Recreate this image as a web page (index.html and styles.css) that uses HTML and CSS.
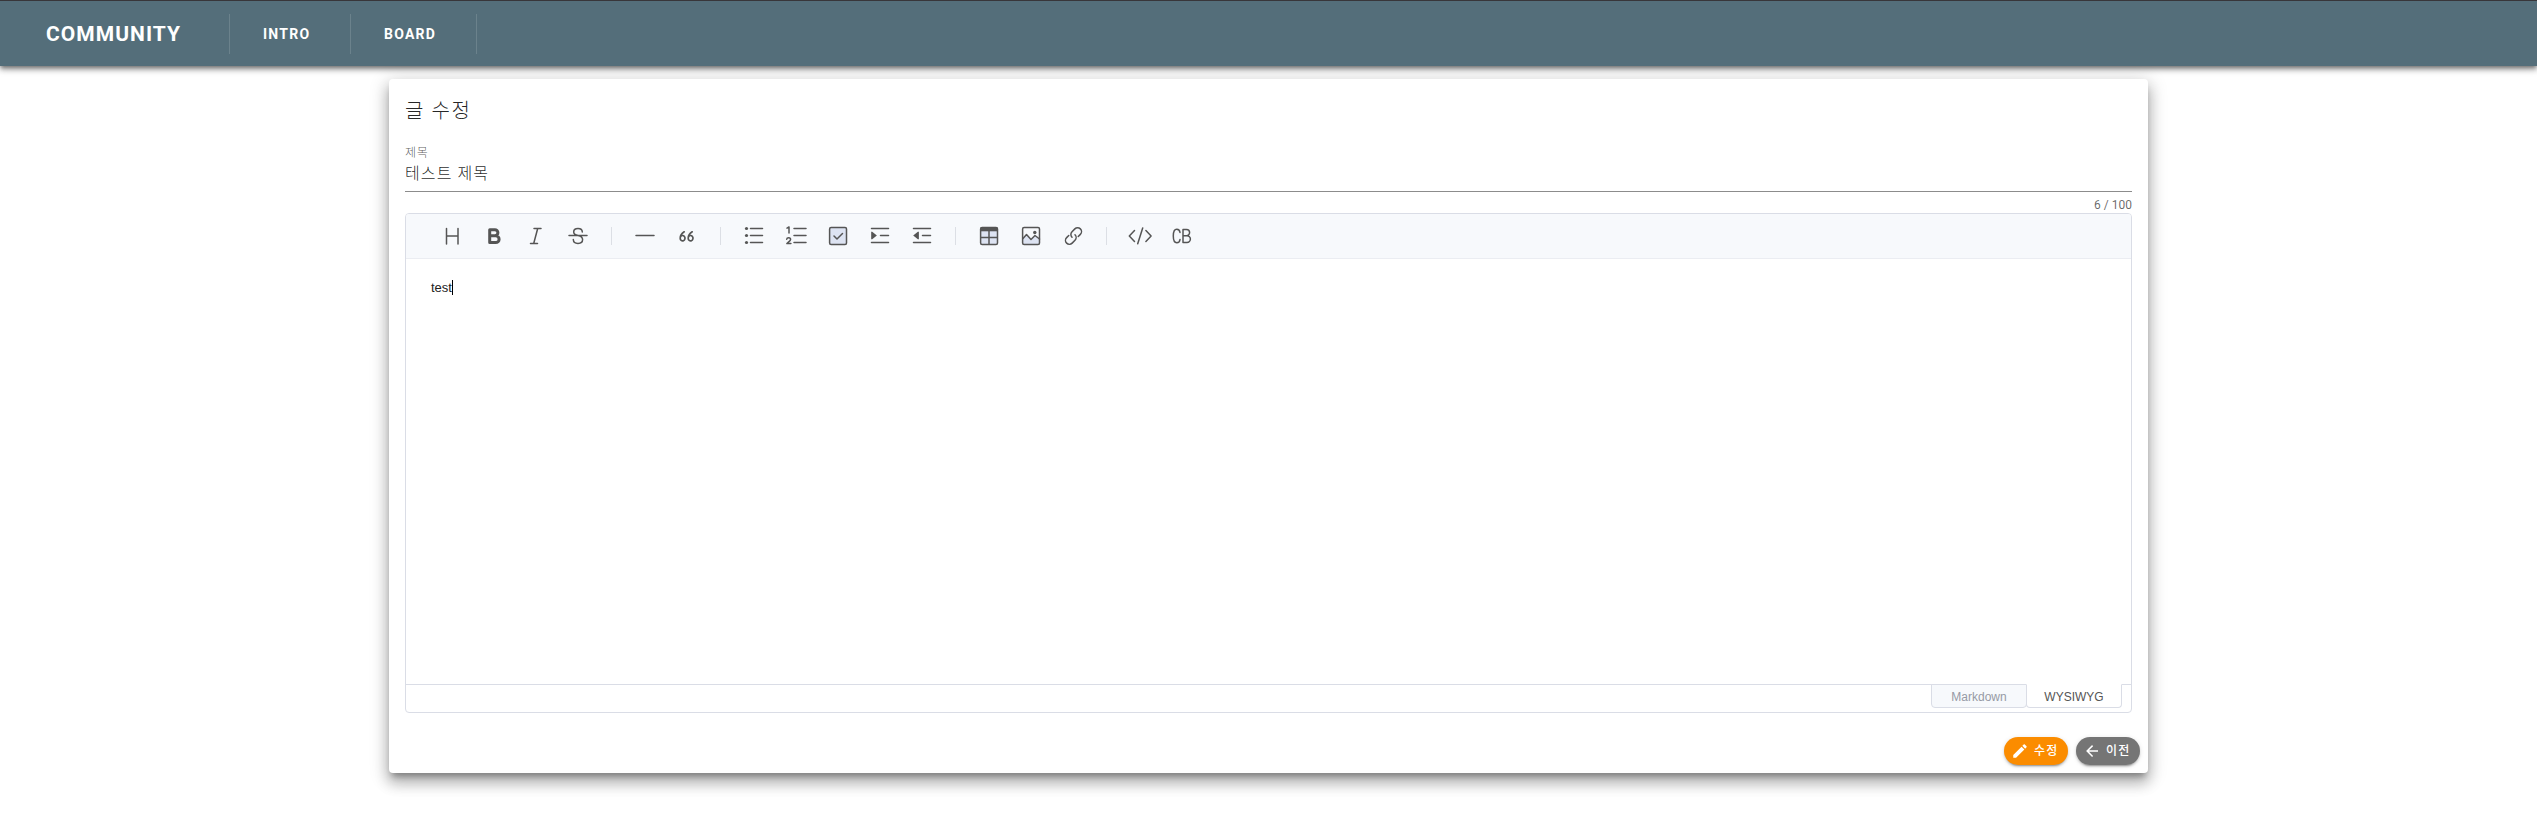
FILE: index.html
```html
<!DOCTYPE html>
<html lang="ko">
<head>
<meta charset="utf-8">
<title>Community</title>
<link rel="stylesheet" href="styles.css">
</head>
<body>
<header class="app-bar">
  <a class="brand">COMMUNITY</a>
  <a class="nav-item intro">INTRO</a>
  <a class="nav-item board">BOARD</a>
</header>
<main class="card">
  <h1 class="card-title">글 수정</h1>
  <div class="field">
    <label class="field-label">제목</label>
    <div class="field-value">테스트 제목</div>
  </div>
  <div class="counter">6 / 100</div>
  <section class="editor">
    <div class="toolbar">
      <svg class="tool" viewBox="0 0 32 32"><path d="M10.500 8.500v15.500M22 8.500v15.500M10.500 16h11.500"/></svg>
      <svg class="tool bold" viewBox="0 0 32 32"><path d="M11.700 9.800h5.200a3 3 0 0 1 0 6h-5.200zM11.700 15.800h6a3.400 3.400 0 0 1 0 6.800h-6z"/></svg>
      <svg class="tool" viewBox="0 0 32 32"><path d="M14 8.500h7M10.500 23.500h7M17.700 8.500l-4 15"/></svg>
      <svg class="tool" viewBox="0 0 32 32"><path d="M7 15.500h18M20.300 12c0-2-1.800-3.500-4.300-3.500s-4.300 1.300-4.300 3.400c0 2.200 2 3 4.400 3.600 2.700.7 4.500 1.600 4.500 4 0 2.300-1.900 3.900-4.600 3.900-2.800 0-4.600-1.500-4.700-3.900"/></svg>
      <span class="split"></span>
      <svg class="tool" viewBox="0 0 32 32"><path d="M7 15.500h18"/></svg>
      <svg class="tool quote" viewBox="0 0 32 32"><path d="M13.200 11.800c-2.800 1.800-4 4-4 6.400a2.400 2.700 0 1 0 .3-1.300M21.200 11.800c-2.800 1.800-4 4-4 6.400a2.400 2.700 0 1 0 .3-1.300"/></svg>
      <span class="split"></span>
      <svg class="tool" viewBox="0 0 32 32"><g class="solid"><circle cx="8.500" cy="8.500" r="1.600"/><circle cx="8.500" cy="15.500" r="1.600"/><circle cx="8.500" cy="22.500" r="1.600"/></g><path d="M12.500 8.500h12M12.500 15.500h12M12.500 22.500h12"/></svg>
      <svg class="tool" viewBox="0 0 32 32"><path d="M14 8.500h12M14 15.500h12M14 22.500h12"/><path class="num" d="M7 8.200L9 7v6M6.700 19.300c.2-2.200 3.900-2.200 3.900.1 0 1.400-2.500 2.800-3.700 4.200h4"/></svg>
      <svg class="tool" viewBox="0 0 32 32"><rect class="tint" x="7.600" y="7.600" width="16.900" height="16.900" rx="1.500"/><path d="M12 16l3 3 5.500-5.500"/></svg>
      <svg class="tool" viewBox="0 0 32 32"><path d="M7.500 8.500h17M16.500 15.500h8M7.500 22.500h17"/><path class="solid" d="M7.200 11.800h1l4.700 3.700-4.700 3.700h-1z"/></svg>
      <svg class="tool" viewBox="0 0 32 32"><path d="M7.500 8.500h17M16.500 15.500h8M7.500 22.500h17"/><path class="solid" d="M12.900 11.800h-1l-4.700 3.700 4.700 3.700h1z"/></svg>
      <span class="split"></span>
      <svg class="tool" viewBox="0 0 32 32"><rect class="tint" x="7.600" y="7.600" width="16.900" height="16.900" rx="1.500"/><path class="solid" d="M7.500 7.500h17v3.800h-17z"/><path d="M16 11v13M8 17.500h16"/></svg>
      <svg class="tool" viewBox="0 0 32 32"><path class="hills" d="M8 18.500l3.500-4 4.500 5 4-4 4.500 3.500v5H8z"/><rect x="7.600" y="7.600" width="16.900" height="16.900" rx="1.500"/><path d="M8 18.500l3.500-4 4.500 5 4-4 4.500 3.500"/><circle class="solid" cx="19.800" cy="12.500" r="1.700"/></svg>
      <svg class="tool" viewBox="0 0 32 32"><g transform="rotate(-45 16.500 16)"><path d="M13.500 12.300h-3a3.900 3.900 0 0 0 0 7.800h4a3.900 3.900 0 0 0 3.900-3.900M19.500 19.700h3a3.900 3.900 0 0 0 0-7.800h-4a3.900 3.900 0 0 0-3.900 3.900"/></g></svg>
      <span class="split"></span>
      <svg class="tool" viewBox="0 0 32 32"><path d="M10.500 10.500L5.300 16l5.200 5.500M21.900 10.500l5.200 5.500-5.200 5.500M18.700 8l-5 15.700"/></svg>
      <svg class="tool" viewBox="0 0 32 32"><path d="M14 12.500c-.2-2-1.400-3.200-3.200-3.200-2.200 0-3.500 1.800-3.500 6.700s1.300 6.700 3.500 6.700c1.800 0 3-1.200 3.200-3.200M17 9.500h3.500a3.100 3.100 0 0 1 0 6.200H17zM17 15.700h4a3.400 3.400 0 0 1 0 6.800h-4z"/></svg>
    </div>
    <div class="content"><span>test</span><i class="caret"></i></div>
    <div class="modes">
      <span class="mode">Markdown</span><span class="mode active">WYSIWYG</span>
    </div>
  </section>
  <footer class="actions">
    <button class="btn edit"><svg viewBox="0 0 24 24"><path d="M20.710 7.040c.390-.390.390-1.040 0-1.410l-2.340-2.340c-.370-.390-1.020-.390-1.410 0l-1.840 1.830 3.750 3.750M3 17.250V21h3.750L17.810 9.930l-3.750-3.750z"/></svg>수정</button>
    <button class="btn back"><svg viewBox="0 0 24 24"><path d="M20 11v2H8l5.500 5.500-1.420 1.420L4.160 12l7.920-7.920L13.500 5.500 8 11z"/></svg>이전</button>
  </footer>
</main>
</body>
</html>
```
FILE: styles.css
```css
* { box-sizing: border-box; }
body {
  margin: 0;
  height: 816px;
  overflow: hidden;
  background: #fff;
  color: rgba(0, 0, 0, .87);
  font-family: Roboto, "Noto Sans CJK KR", sans-serif;
}
.app-bar {
  height: 66px;
  padding: 13px 0 12px 46px;
  border-top: 1px solid #38363a;
  background: #546e7a;
  color: #fff;
  display: flex;
  position: relative;
  z-index: 1;
  box-shadow: 0 2px 4px -1px rgba(0,0,0,.4), 0 4px 5px rgba(0,0,0,.24), 0 1px 10px rgba(0,0,0,.2);
}
.brand, .nav-item {
  height: 40px;
  line-height: 41px;
  font-weight: 700;
  border-right: 1px solid #6b828c;
  white-space: nowrap;
}
.brand { width: 184px; font-size: 21px; letter-spacing: 1.05px; }
.nav-item { font-size: 14px; letter-spacing: 1.25px; padding-left: 33px; line-height: 40px; }
.intro { width: 121px; }
.board { width: 126px; }
.card {
  width: 1759px;
  height: 694px;
  margin: 13px 0 0 389px;
  padding: 16px 16px 0;
  border-radius: 4px;
  background: #fff;
  box-shadow: 0 6px 6px -3px rgba(0,0,0,.3), 0 10px 14px 1px rgba(0,0,0,.2), 0 4px 18px 3px rgba(0,0,0,.16);
}
.card-title { margin: 0; font-size: 20px; font-weight: 300; line-height: 32px; letter-spacing: 1.6px; }
.field { height: 65px; padding-top: 18px; border-bottom: 1px solid #8c8c8c; font-weight: 300; }
.field-label { display: block; font-size: 12px; line-height: 16px; letter-spacing: .6px; color: rgba(0,0,0,.65); }
.field-value { font-size: 16px; line-height: 26px; letter-spacing: 1.1px; }
.counter { height: 21px; padding-top: 7px; text-align: right; font-size: 12px; line-height: 12px; color: rgba(0,0,0,.6); }
.editor { height: 500px; border: 1px solid #dadde6; border-radius: 4px; display: flex; flex-direction: column; }
.toolbar {
  height: 45px;
  padding: 0 30px;
  background: #f7f9fc;
  border-bottom: 1px solid #ebedf2;
  border-radius: 3px 3px 0 0;
  display: flex;
  align-items: center;
  gap: 10px;
}
.tool { width: 32px; height: 32px; flex: none; fill: none; stroke: #555; stroke-width: 1.5; stroke-linecap: round; stroke-linejoin: round; }
.bold { stroke-width: 3; }
.quote { stroke-width: 1.7; }
.num { stroke-width: 1.5; }
.solid { fill: #555; stroke: none; }
.tint { fill: #dde3f2; }
.hills { fill: #dde3f2; stroke: none; }
.split { width: 1px; height: 18px; margin: 0 7px; background: #dcdfe5; flex: none; }
.content { flex: 1; padding: 21px 25px; display: flex; font: 13px/15px "Liberation Sans", Arial, sans-serif; color: #222; }
.caret { width: 1px; height: 15px; background: #000; }
.modes { height: 28px; padding-right: 9px; border-top: 1px solid #dadde6; display: flex; justify-content: flex-end; font: 12px/22px "Liberation Sans", Arial, sans-serif; }
.mode { width: 96px; height: 24px; margin-top: -1px; border: 1px solid #dadde6; border-radius: 0 0 4px 4px; background: #f7f9fc; color: #969aa5; text-align: center; line-height: 24px; }
.mode.active { margin-left: -1px; background: #fff; border-top-color: #fff; color: #555; }
.actions { padding: 24px 0 0; margin-right: -8px; display: flex; justify-content: flex-end; gap: 8px; }
.btn {
  width: 64px;
  height: 28px;
  padding: 0 0 0 7px;
  border: 0;
  border-radius: 14px;
  color: #fff;
  font: 500 12px/28px Roboto, "Noto Sans CJK KR", sans-serif;
  letter-spacing: 1.3px;
  display: flex;
  align-items: center;
  gap: 5px;
  box-shadow: 0 3px 1px -2px rgba(0,0,0,.2), 0 2px 2px rgba(0,0,0,.14), 0 1px 5px rgba(0,0,0,.12);
}
.btn svg { width: 18px; height: 18px; fill: #fff; }
.edit { background: #fb8c00; }
.back { background: #757575; }
```
